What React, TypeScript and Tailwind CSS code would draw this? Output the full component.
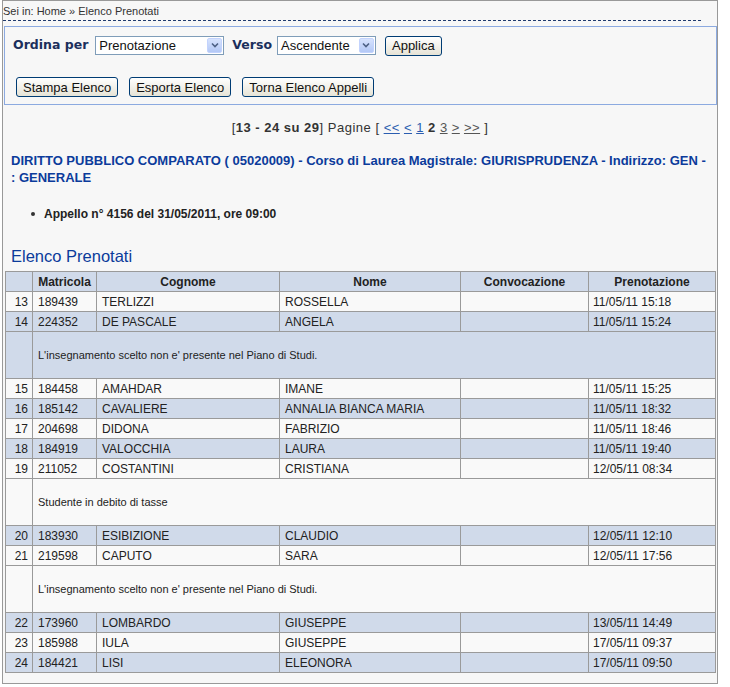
import React from 'react';

type Row = { n: number; mat: string; cognome: string; nome: string; data: string; note?: string };

const rows: Row[] = [
  { n: 13, mat: '189439', cognome: 'TERLIZZI', nome: 'ROSSELLA', data: '11/05/11 15:18' },
  { n: 14, mat: '224352', cognome: 'DE PASCALE', nome: 'ANGELA', data: '11/05/11 15:24', note: "L'insegnamento scelto non e' presente nel Piano di Studi." },
  { n: 15, mat: '184458', cognome: 'AMAHDAR', nome: 'IMANE', data: '11/05/11 15:25' },
  { n: 16, mat: '185142', cognome: 'CAVALIERE', nome: 'ANNALIA BIANCA MARIA', data: '11/05/11 18:32' },
  { n: 17, mat: '204698', cognome: 'DIDONA', nome: 'FABRIZIO', data: '11/05/11 18:46' },
  { n: 18, mat: '184919', cognome: 'VALOCCHIA', nome: 'LAURA', data: '11/05/11 19:40' },
  { n: 19, mat: '211052', cognome: 'COSTANTINI', nome: 'CRISTIANA', data: '12/05/11 08:34', note: 'Studente in debito di tasse' },
  { n: 20, mat: '183930', cognome: 'ESIBIZIONE', nome: 'CLAUDIO', data: '12/05/11 12:10' },
  { n: 21, mat: '219598', cognome: 'CAPUTO', nome: 'SARA', data: '12/05/11 17:56', note: "L'insegnamento scelto non e' presente nel Piano di Studi." },
  { n: 22, mat: '173960', cognome: 'LOMBARDO', nome: 'GIUSEPPE', data: '13/05/11 14:49' },
  { n: 23, mat: '185988', cognome: 'IULA', nome: 'GIUSEPPE', data: '17/05/11 09:37' },
  { n: 24, mat: '184421', cognome: 'LISI', nome: 'ELEONORA', data: '17/05/11 09:50' },
];

function FakeSelect({ value, width }: { value: string; width: string }) {
  return (
    <div className={`${width} h-[19px] flex items-center border border-[#7f9db9] bg-white pl-[3px] pr-[1px]`}>
      <span className="flex-1 text-[13px] leading-[17px] text-[#111]">{value}</span>
      <span className="w-[15px] h-[15px] flex items-center justify-center rounded-[2px] border border-[#c3d3fd] bg-gradient-to-b from-[#d7e3fd] to-[#b3c8f6]">
        <svg width="8" height="6" viewBox="0 0 8 6">
          <path d="M1 1.5 L4 4.5 L7 1.5" fill="none" stroke="#4d6185" strokeWidth="1.6" />
        </svg>
      </span>
    </div>
  );
}

function XpButton({ label }: { label: string }) {
  return (
    <button className="h-[20px] px-[6px] rounded-[3px] border border-[#003c74] bg-gradient-to-b from-white to-[#e6e3d6] text-[13px] leading-[17px] text-[#111]">
      {label}
    </button>
  );
}

export default function App() {
  const cell = 'border border-[#9a9a9a] px-[5px] leading-[18px] text-[#222]';
  const td = `${cell} text-[12px]`;
  return (
    <div className="min-h-screen bg-white font-['Liberation_Sans',Arial,sans-serif]">
      <div className="ml-[2px] w-[716px] h-[684px] border border-[#999] bg-[#f7f7f7]">
        <div className="w-[698px] h-[20px] pt-[1px] border-b border-dashed border-[#1f3a6e] text-[11px] leading-[18px] text-[#333]">
          Sei in: Home » Elenco Prenotati
        </div>

        <div className="ml-[1px] mt-[5px] w-[713px] h-[79px] border border-[#8caae0] pt-[8px] pl-[8px]">
          <div className="flex items-center h-[20px]">
            <span className="font-['DejaVu_Sans',Verdana,sans-serif] font-bold text-[12.5px] text-[#1b2f5c] mr-[7px]">Ordina per</span>
            <FakeSelect value="Prenotazione" width="w-[129px]" />
            <span className="font-['DejaVu_Sans',Verdana,sans-serif] font-bold text-[12.5px] text-[#1b2f5c] ml-[8px] mr-[5px]">Verso</span>
            <FakeSelect value="Ascendente" width="w-[99px]" />
            <span className="ml-[9px]"><XpButton label="Applica" /></span>
          </div>
          <div className="flex items-center gap-[11px] mt-[22px] ml-[3px]">
            <XpButton label="Stampa Elenco" />
            <XpButton label="Esporta Elenco" />
            <XpButton label="Torna Elenco Appelli" />
          </div>
        </div>

        <div className="mt-[15px] text-center text-[13px] leading-[16px] tracking-[0.5px] text-[#333]">
          [<b>13 - 24 su 29</b>] Pagine [ <a className="underline text-[#2a5db0]">&lt;&lt;</a>{' '}
          <a className="underline text-[#2a5db0]">&lt;</a> <a className="underline text-[#2a5db0]">1</a>{' '}
          <b>2</b> <a className="underline text-[#555]">3</a> <a className="underline text-[#555]">&gt;</a>{' '}
          <a className="underline text-[#555]">&gt;&gt;</a> ]
        </div>

        <div className="mt-[16px] pl-[8px] text-[13px] leading-[17px] font-bold text-[#0b3b9b]">
          <span className="whitespace-nowrap">DIRITTO PUBBLICO COMPARATO ( 05020009) - Corso di Laurea Magistrale: GIURISPRUDENZA - Indirizzo: GEN -</span>
          <br />: GENERALE
        </div>

        <ul className="mt-[20px] pl-[28px] text-[12px] leading-[16px] font-bold text-[#222]">
          <li className="flex items-center">
            <span className="w-[4px] h-[4px] rounded-full bg-[#333] mr-[9px]" />
            Appello n° 4156 del 31/05/2011, ore 09:00
          </li>
        </ul>

        <div className="mt-[24px] pl-[8px] text-[16.5px] leading-[20px] text-[#0b3b9b]">Elenco Prenotati</div>

        <table className="mt-[5px] ml-[2px] w-[710px] table-fixed border-collapse">
          <colgroup>
            <col className="w-[27px]" />
            <col className="w-[64px]" />
            <col className="w-[183px]" />
            <col className="w-[181px]" />
            <col className="w-[128px]" />
            <col className="w-[127px]" />
          </colgroup>
          <thead>
            <tr className="bg-[#d0daea] h-[20px]">
              <th className={`${td} font-bold text-[#1d3461]`}></th>
              <th className={`${td} font-bold text-center text-[#1d3461]`}>Matricola</th>
              <th className={`${td} font-bold text-center text-[#1d3461]`}>Cognome</th>
              <th className={`${td} font-bold text-center text-[#1d3461]`}>Nome</th>
              <th className={`${td} font-bold text-center text-[#1d3461]`}>Convocazione</th>
              <th className={`${td} font-bold text-center text-[#1d3461]`}>Prenotazione</th>
            </tr>
          </thead>
          <tbody>
            {rows.map((r) => {
              const bg = r.n % 2 === 0 ? 'bg-[#d0daea]' : 'bg-[#f9f9f9]';
              return (
                <React.Fragment key={r.n}>
                  <tr className={`${bg} h-[20px]`}>
                    <td className={`${td} text-right pr-[4px]`}>{r.n}</td>
                    <td className={td}>{r.mat}</td>
                    <td className={td}>{r.cognome}</td>
                    <td className={td}>{r.nome}</td>
                    <td className={td}></td>
                    <td className={`${td} pl-[4px]`}>{r.data}</td>
                  </tr>
                  {r.note && (
                    <tr className={`${bg} h-[47px]`}>
                      <td className={td}></td>
                      <td colSpan={5} className={`${cell} text-[11px]`}>{r.note}</td>
                    </tr>
                  )}
                </React.Fragment>
              );
            })}
          </tbody>
        </table>
      </div>
    </div>
  );
}
